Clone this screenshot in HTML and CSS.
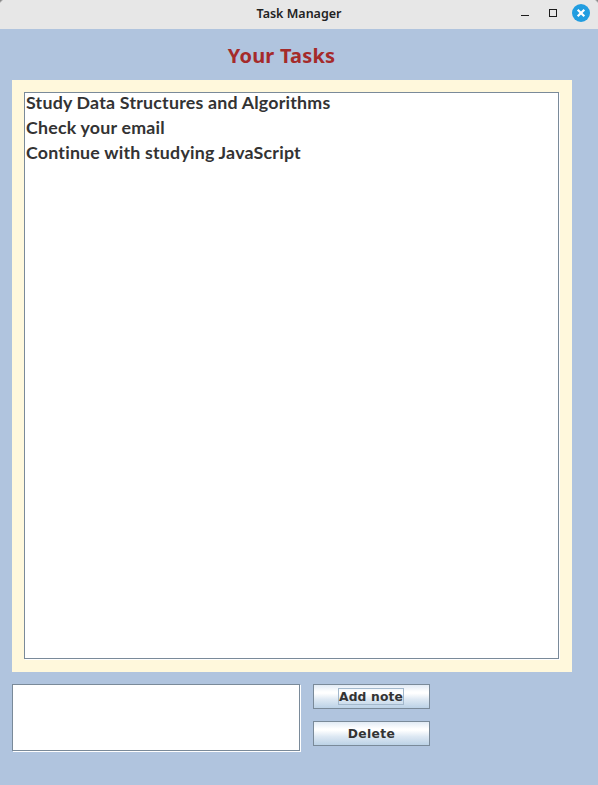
FILE: index.html
```html
<!DOCTYPE html>
<html lang="en">
<head>
<meta charset="utf-8">
<title>Task Manager</title>
<link rel="stylesheet" href="styles.css">
</head>
<body>
<div class="window">
  <header class="titlebar">
    <span class="caption">Task Manager</span>
    <svg class="controls" width="80" height="29" viewBox="0 0 80 29">
      <path d="M3 15.500H11" stroke="#1c1c1c"/>
      <rect x="31.500" y="9.500" width="7" height="7" fill="none" stroke="#1c1c1c"/>
      <circle cx="63" cy="13" r="9" fill="#219de0"/>
      <path d="M59.700 9.700L66.300 16.300M66.300 9.700L59.700 16.300" stroke="#fff" stroke-width="2.200"/>
    </svg>
  </header>
  <main class="content">
    <h1 class="heading">Your Tasks</h1>
    <section class="panel">
      <ul class="inset list">
        <li>Study Data Structures and Algorithms</li>
        <li>Check your email</li>
        <li>Continue with studying JavaScript</li>
      </ul>
    </section>
    <div class="entry">
      <div class="inset field"></div>
      <div class="actions">
        <button class="btn add" type="button"><span class="focus">Add note</span></button>
        <button class="btn delete" type="button"><span>Delete</span></button>
      </div>
    </div>
  </main>
</div>
</body>
</html>
```
FILE: styles.css
```css
* { box-sizing: border-box; }
body { margin: 0; background: #b0c4de; }
.window { width: 598px; height: 785px; background: #b0c4de; overflow: hidden; }
.titlebar {
  height: 29px;
  position: relative;
  text-align: center;
  background:
    linear-gradient(135deg, #888 0 1px, transparent 2.500px) 0 0 / 5px 5px no-repeat,
    linear-gradient(225deg, #888 0 1px, transparent 2.500px) 100% 0 / 5px 5px no-repeat,
    #e7e7e7;
}
.caption {
  font: 600 12.5px/27px "Noto Sans", sans-serif;
  color: #222;
}
.controls { position: absolute; top: 0; left: 518px; }
.content { padding: 0 12px; }
.heading {
  margin: 0;
  width: 539px;
  height: 51px;
  text-align: center;
  font: bold 20px/53px "Noto Sans", sans-serif;
  letter-spacing: 0.2px;
  color: #a52a2a;
}
.panel {
  width: 560px;
  height: 592px;
  padding: 12px;
  background: #fff8dc;
}
.inset {
  border: 1px solid #7a8a99;
  background: #fff;
  box-shadow: 1px 1px 0 #fff;
}
.list {
  width: 535px;
  height: 567px;
  margin: 0;
  padding: 0 1px;
  list-style: none;
  font: bold 17.8px/25px Lato, sans-serif;
  letter-spacing: 0.21px;
  font-variant-ligatures: none;
  color: #333;
}
.list li { height: 25px; line-height: 19px; white-space: nowrap; }
.entry { display: flex; gap: 13px; margin-top: 12px; }
.field { width: 288px; height: 67px; }
.actions { display: flex; flex-direction: column; gap: 12px; }
.btn {
  display: flex;
  align-items: center;
  justify-content: center;
  width: 117px;
  height: 25px;
  padding: 0;
  border: 1px solid #7a8a99;
  background: linear-gradient(#e2ebf5, #fff 30%, #fff 36%, #dde8f3 63%, #bcd2e6);
  font: bold 12.3px/17px "DejaVu Sans", sans-serif;
  color: #333;
}
.add { letter-spacing: 0.15px; padding-right: 1px; }
.delete { letter-spacing: 0.35px; }
.focus { border: 1px solid #a3b8cc; width: 66px; height: 17px; white-space: nowrap; }
.delete span { padding-top: 1px; }
```
